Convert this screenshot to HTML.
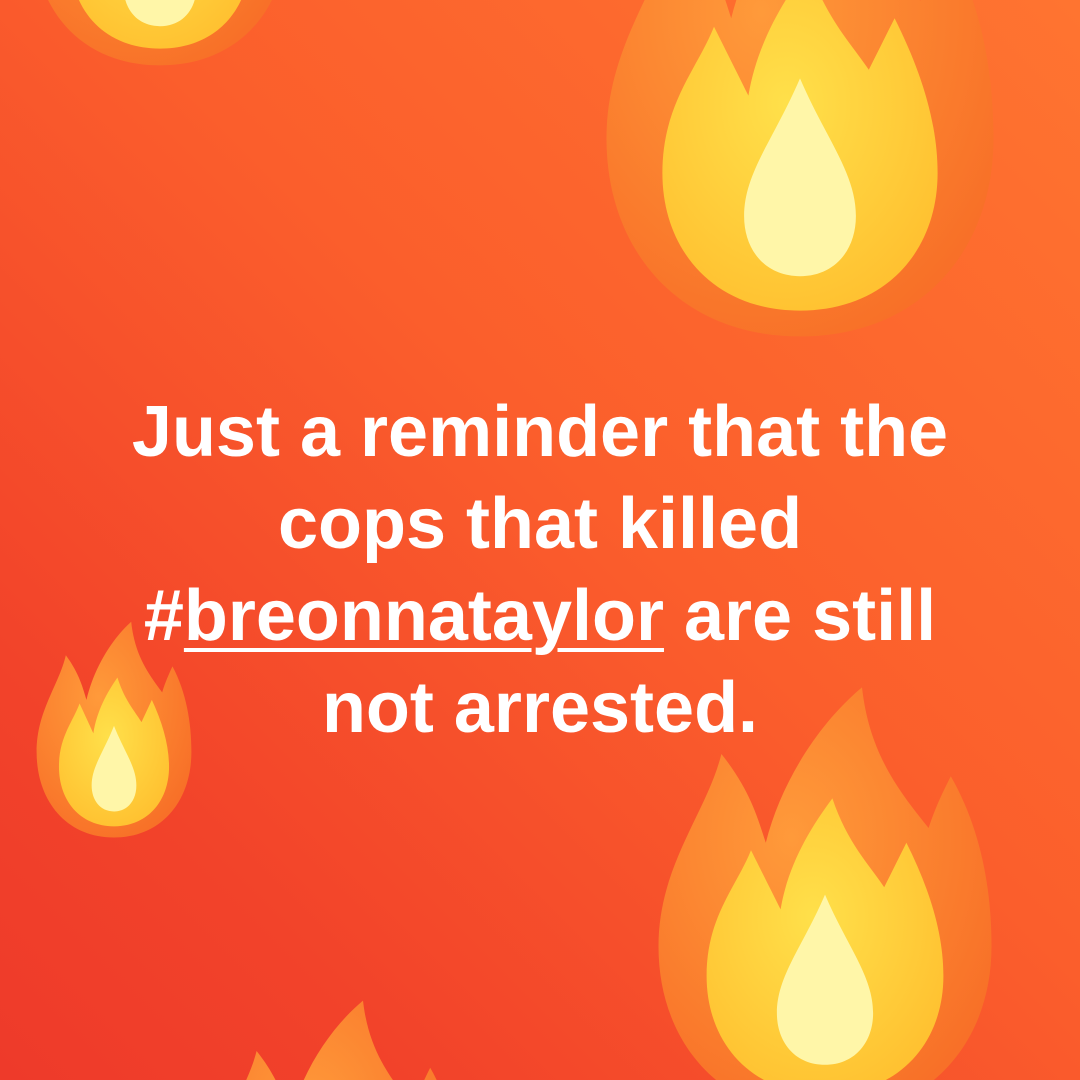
<!DOCTYPE html>
<html><head><meta charset="utf-8"><style>
html,body{margin:0;padding:0;overflow:hidden;height:1080px}
body{width:1080px;height:1080px;overflow:hidden;position:relative;
background:linear-gradient(225deg,#ff7430 0%,#fb5e2c 45%,#f2432a 80%,#ee3a2a 100%);
font-family:"Liberation Sans",Arial,sans-serif}
svg{position:absolute;left:0;top:0;display:block;overflow:hidden}
.t{position:absolute;left:0;width:1080px;text-align:center;color:#fff;font-weight:bold;font-size:72px;line-height:92px;top:386px;letter-spacing:0}
.t u{text-decoration-thickness:4px;text-underline-offset:8px}
</style></head><body>
<svg width="1080" height="1080" viewBox="0 0 1080 1080">
<defs>
<radialGradient id="go" cx="0.4" cy="0.35" r="0.8"><stop offset="0" stop-color="#ff9a3a"/><stop offset="1" stop-color="#f76a25"/></radialGradient>
<radialGradient id="gy" cx="0.45" cy="0.4" r="0.7"><stop offset="0" stop-color="#ffe04a"/><stop offset="1" stop-color="#ffbe2e"/></radialGradient>
<g id="f">
<path fill="url(#go)" d="M50 118 C22 118 5 98 5 72 C5 50 18 36 22 20 C30 30 32 38 34 44 C38 28 48 12 60 2 C62 20 70 30 78 40 C80 34 82 30 84 26 C92 40 95 56 95 72 C95 98 78 118 50 118 Z"/>
<path fill="url(#gy)" d="M50 112 C30 112 18 98 18 80 C18 64 26 56 30 46 C34 54 36 58 38 62 C40 50 46 40 52 32 C56 44 62 50 66 56 C68 52 70 48 72 44 C78 56 82 68 82 80 C82 98 70 112 50 112 Z"/>
<path fill="#fff6a8" d="M50 104 C42 104 37 98 37 90 C37 80 44 72 50 58 C56 72 63 80 63 90 C63 98 58 104 50 104 Z"/>
</g>
</defs>
<use href="#f" transform="translate(585,-171) scale(4.3)"/>
<use href="#f" transform="translate(20,-265) scale(2.8)"/>
<use href="#f" transform="translate(28,618) scale(1.72,1.86)"/>
<use href="#f" transform="translate(640,680) scale(3.7)"/>
<use href="#f" transform="translate(195,995) scale(2.8)"/>
</svg>
<div class="t">Just a reminder that the<br>cops that killed<br>#<u>breonnataylor</u> are still<br>not arrested.</div>
</body></html>
